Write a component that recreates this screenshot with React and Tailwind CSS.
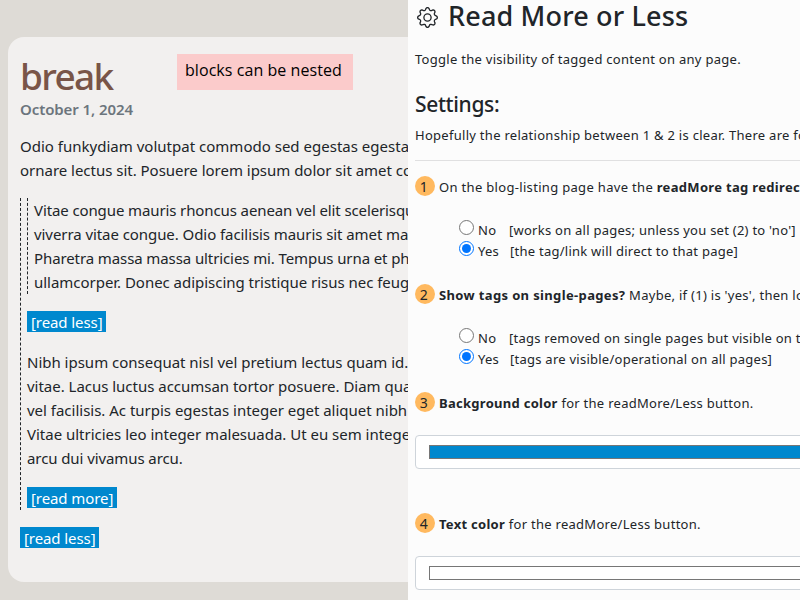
import { BsGear } from "react-icons/bs";

function Line({ children, className = "" }) {
  return (
    <div className="h-6 whitespace-nowrap leading-6">
      <span className={className}>{children}</span>
    </div>
  );
}

function Tag({ children }) {
  return (
    <div className="flex h-6 items-start pt-px">
      <span className="h-[21px] whitespace-nowrap bg-[#0088ce] px-1 leading-[22px] text-white">{children}</span>
    </div>
  );
}

function Post() {
  return (
    <section className="relative h-[600px] w-[408px] shrink-0 overflow-hidden bg-[#dedbd6] pl-2 pt-[37px] text-[15px] tracking-[-0.09px] text-[#212529]">
      <article className="h-[545px] rounded-l-[16px] bg-[#f2f0ef] pl-3 pt-[15px]">
        <h1 className="h-12 text-[37px] font-medium leading-[48px] tracking-[-1.7px] text-[#795548]">break</h1>
        <p className="h-[34px] text-[15px] font-semibold leading-[19px] text-[#6c757d]">October 1, 2024</p>
        <Line className="tracking-[0.01px]">Odio funkydiam volutpat commodo sed egestas egestas fringilla</Line>
        <Line className="tracking-[-0.02px]">ornare lectus sit. Posuere lorem ipsum dolor sit amet consectetur</Line>
        <div className="mb-4 mt-4 w-[600px] border-l border-dashed border-[#212529] pl-1.5">
          <div className="border-l border-dashed border-[#212529] pl-1.5">
            <Line className="tracking-[-0.11px]">Vitae congue mauris rhoncus aenean vel elit scelerisque</Line>
            <Line className="tracking-[-0.07px]">viverra vitae congue. Odio facilisis mauris sit amet massa</Line>
            <Line className="tracking-[-0.1px]">Pharetra massa massa ultricies mi. Tempus urna et pharetra</Line>
            <Line className="tracking-[-0.03px]">ullamcorper. Donec adipiscing tristique risus nec feugiat</Line>
          </div>
          <div className="py-4">
            <Tag>[read less]</Tag>
          </div>
          <Line className="tracking-[-0.01px]">Nibh ipsum consequat nisl vel pretium lectus quam id. Leo</Line>
          <Line className="tracking-[-0.02px]">vitae. Lacus luctus accumsan tortor posuere. Diam quam</Line>
          <Line className="tracking-[-0.01px]">vel facilisis. Ac turpis egestas integer eget aliquet nibh</Line>
          <Line className="tracking-[-0.01px]">Vitae ultricies leo integer malesuada. Ut eu sem integer</Line>
          <Line>arcu dui vivamus arcu.</Line>
          <div className="pt-4">
            <Tag>[read more]</Tag>
          </div>
        </div>
        <Tag>[read less]</Tag>
      </article>
      <div className="absolute left-[177px] top-[54px] h-9 w-44 whitespace-nowrap bg-[#fbcbcb] pl-2 font-['Open_Sans',sans-serif] text-[16px] font-medium leading-[33px] tracking-[0.06px] text-black">
        blocks can be nested
      </div>
    </section>
  );
}

function Setting({ number, children }) {
  return (
    <div className="flex h-5 items-center whitespace-nowrap">
      <span className="mr-1 flex size-5 shrink-0 items-center justify-center rounded-full bg-[#ffb95f] pr-0.5 pt-0.5 text-[14px] leading-5">{number}</span>
      <span className="pt-0.5 leading-5">{children}</span>
    </div>
  );
}

function Choice({ name, label, hint, checked }) {
  return (
    <label className="flex h-[21px] items-start whitespace-nowrap tracking-[0.25px]">
      <input type="radio" name={name} defaultChecked={checked} className="mr-1 size-[15px] shrink-0 accent-[#0075ff]" />
      <span className={checked ? "w-8 shrink-0 leading-5" : "w-[31px] shrink-0 leading-5"}>{label}</span>
      <span className="leading-5">{hint}</span>
    </label>
  );
}

function ColorField({ children }) {
  return (
    <div className="h-[34px] w-[600px] rounded border border-[#ced4da] bg-white py-[9px] pl-[13px]">
      {children}
    </div>
  );
}

function Settings() {
  return (
    <section className="h-[600px] w-[392px] overflow-hidden bg-[#fcfcfc] pl-[7px] text-[13px] tracking-[0.28px] text-[#212529]">
      <header className="flex h-[34px] items-center whitespace-nowrap pl-0.5">
        <BsGear className="mr-[10px] size-[21px]" />
        <h1 className="-mt-0.5 text-[27px] font-medium leading-[34px] tracking-[0.16px]">Read More or Less</h1>
      </header>
      <p className="mt-[15px] h-5 leading-5">Toggle the visibility of tagged content on any page.</p>
      <h2 className="mt-[19px] h-8 text-[21px] font-medium leading-8 tracking-[-0.35px]">Settings:</h2>
      <p className="mt-[5px] h-5 whitespace-nowrap leading-5">Hopefully the relationship between 1 &amp; 2 is clear. There are four settings</p>
      <hr className="mt-[15px] border-[#e0e0e1]" />
      <div className="mt-[15px]">
        <Setting number="1"><span className="tracking-[0.32px]">On the blog-listing page have the <b className="font-bold">readMore tag redirect</b></span></Setting>
      </div>
      <div className="mt-6 pl-11">
        <Choice name="redirect" label="No" hint="[works on all pages; unless you set (2) to 'no']" />
        <Choice name="redirect" label="Yes" hint="[the tag/link will direct to that page]" checked />
      </div>
      <div className="mt-[22px]">
        <Setting number="2"><b className="font-bold tracking-[0.36px]">Show tags on single-pages?</b> Maybe, if (1) is 'yes', then look</Setting>
      </div>
      <div className="mt-6 pl-11">
        <Choice name="single" label="No" hint="[tags removed on single pages but visible on the" />
        <Choice name="single" label="Yes" hint="[tags are visible/operational on all pages]" checked />
      </div>
      <div className="mb-[23px] mt-[22px]">
        <Setting number="3"><b className="font-bold">Background color</b> for the readMore/Less button.</Setting>
      </div>
      <ColorField>
        <div className="h-[14px] border border-[#767676] bg-[#0088ce]" />
      </ColorField>
      <div className="mb-[23px] mt-11">
        <Setting number="4"><b className="font-bold">Text color</b> for the readMore/Less button.</Setting>
      </div>
      <ColorField>
        <div className="h-[14px] border border-[#767676] bg-white" />
      </ColorField>
    </section>
  );
}

export default function App() {
  return (
    <main className="flex h-[600px] w-[800px] overflow-hidden font-['Noto_Sans','Open_Sans',sans-serif]">
      <Post />
      <Settings />
    </main>
  );
}
